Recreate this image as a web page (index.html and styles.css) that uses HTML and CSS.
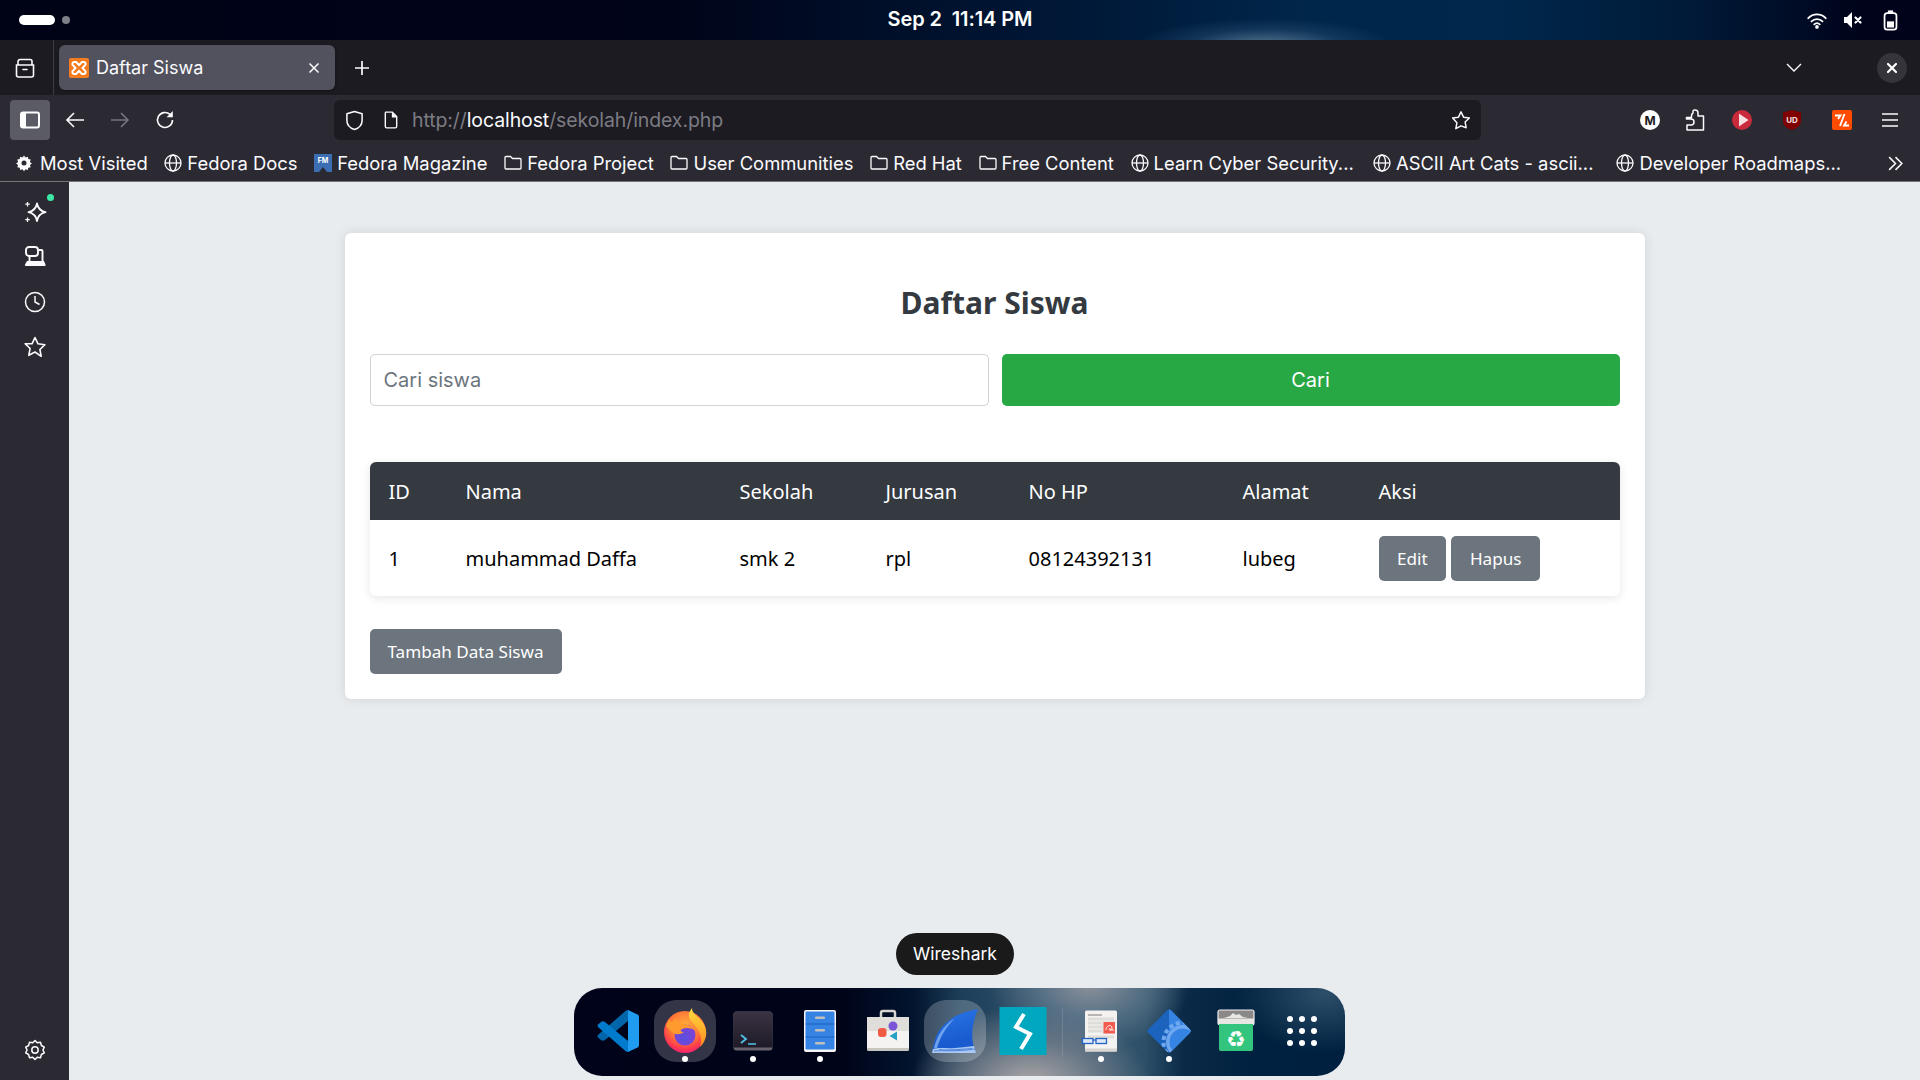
FILE: index.html
```html
<!DOCTYPE html>
<html lang="id">
<head>
<meta charset="utf-8">
<title>Daftar Siswa</title>
<link rel="stylesheet" href="styles.css">
</head>
<body>
<div class="screen">
  <header class="topbar">
    <div class="workspaces"><span class="ws-pill"></span><span class="ws-dot"></span></div>
    <div class="clock">Sep 2&nbsp; 11:14 PM</div>
    <div class="tray">
      <svg class="tray-wifi" viewBox="0 0 24 20"><path d="M2.500 7.500a13 13 0 0 1 19 0M6 11a8.500 8.500 0 0 1 12 0M9 14.200a4.500 4.500 0 0 1 6 0" fill="none" stroke="#fff" stroke-width="2" stroke-linecap="round"/><circle cx="12" cy="17" r="2" fill="#fff"/></svg>
      <svg class="tray-vol" viewBox="0 0 20 20"><path d="M1 7h3l5-5v16l-5-5H1z" fill="#fff"/><path d="M12.500 7.500l5 5M17.500 7.500l-5 5" stroke="#fff" stroke-width="2.200" stroke-linecap="round"/></svg>
      <svg class="tray-bat" viewBox="0 0 16 24"><rect x="1.200" y="3.500" width="13.600" height="19" rx="3" fill="none" stroke="#fff" stroke-width="2"/><rect x="5" y="0.500" width="6" height="3" fill="#fff"/><rect x="4" y="13" width="8" height="7" fill="#fff"/></svg>
    </div>
  </header>

  <div class="tabstrip">
    <div class="tabs-view">
      <svg class="ico-20" viewBox="0 0 20 20"><path d="M1.500 7h17v10a2 2 0 0 1-2 2h-13a2 2 0 0 1-2-2zM3 7V3.500a2 2 0 0 1 2-2h10a2 2 0 0 1 2 2V7M8 11.500h4" fill="none" stroke="#fbfbfe" stroke-width="1.600" stroke-linecap="round"/></svg>
    </div>
    <div class="tab">
      <svg class="favicon" viewBox="0 0 20 20"><rect width="20" height="20" rx="2" fill="#f47c20"/><path d="M7 4h-1.500a2 2 0 0 0-1 3.800L6.500 10l-2 2.200a2 2 0 0 0 1 3.800H7l3-3 3 3h1.500a2 2 0 0 0 1-3.800L13.500 10l2-2.200a2 2 0 0 0-1-3.800H13l-3 3z" fill="none" stroke="#fff" stroke-width="2"/></svg>
      <span class="tab-title">Daftar Siswa</span>
      <svg class="tab-close" viewBox="0 0 12 12"><path d="M1.500 1.500l9 9M10.500 1.500l-9 9" stroke="#fbfbfe" stroke-width="1.500"/></svg>
    </div>
    <svg class="tab-new" viewBox="0 0 16 16"><path d="M8 1v14M1 8h14" stroke="#fbfbfe" stroke-width="1.700"/></svg>
    <div class="strip-end">
      <svg class="tab-list" viewBox="0 0 16 10"><path d="M1 1l7 7 7-7" fill="none" stroke="#fbfbfe" stroke-width="1.400"/></svg>
      <div class="win-close"><svg viewBox="0 0 12 12"><path d="M2 2l8 8M10 2l-8 8" stroke="#fff" stroke-width="2.200" stroke-linecap="round"/></svg></div>
    </div>
  </div>

  <nav class="navbar">
    <div class="sidebar-toggle"><svg class="ico-20" viewBox="0 0 20 20"><rect x="1" y="2.500" width="18" height="15" rx="2" fill="none" stroke="#fff" stroke-width="2"/><rect x="1" y="2.500" width="5" height="15" fill="#fff"/></svg></div>
    <svg class="nav-ico nav-back" viewBox="0 0 20 20"><path d="M19 10H2M9 3l-7 7 7 7" fill="none" stroke="#fbfbfe" stroke-width="1.600"/></svg>
    <svg class="nav-ico nav-fwd" viewBox="0 0 20 20"><path d="M1 10h17M11 3l7 7-7 7" fill="none" stroke="#77767e" stroke-width="1.600"/></svg>
    <svg class="nav-ico nav-reload" viewBox="0 0 20 20"><path d="M17.500 10a7.500 7.500 0 1 1-2.500-5.600" fill="none" stroke="#fbfbfe" stroke-width="1.600"/><path d="M17.800 1v6.200h-6.200z" fill="#fbfbfe"/></svg>
    <div class="urlbar">
      <svg class="url-shield" viewBox="0 0 20 22"><path d="M10 1.500l8 2.500v7c0 5-3.500 8-8 9.500-4.500-1.500-8-4.500-8-9.500V4z" fill="none" stroke="#fbfbfe" stroke-width="1.600" stroke-linejoin="round"/></svg>
      <svg class="url-doc" viewBox="0 0 16 20"><path d="M2 1h7.500L14.500 6v11.500a1.500 1.500 0 0 1-1.500 1.500H3a1.500 1.500 0 0 1-1.500-1.500V2z" fill="none" stroke="#fbfbfe" stroke-width="1.600"/><path d="M9 1v6h6z" fill="#fbfbfe"/></svg>
      <span class="url-text">http://<b class="url-host">localhost</b>/sekolah/index.php</span>
      <svg class="url-star" viewBox="0 0 22 22"><path d="M11 2l2.800 5.900 6.400.8-4.700 4.400 1.200 6.400L11 17.400l-5.700 3.100 1.200-6.400L1.800 8.700l6.400-.8z" fill="none" stroke="#fbfbfe" stroke-width="1.600" stroke-linejoin="round"/></svg>
    </div>
    <div class="ext-row">
      <svg class="ext ext-m" viewBox="0 0 20 20"><circle cx="10" cy="10" r="10" fill="#fff"/><text x="10" y="14.500" class="ext-m-text">M</text></svg>
      <svg class="ext ext-puzzle" viewBox="0 0 20 22"><path d="M1.500 8.500h5V6.800A3 3 0 0 1 8 4V2.500a1.500 1.500 0 0 1 1.500-1.500h.5A3 3 0 0 1 13 4v3h5.500v14H2v-5h4a3 3 0 0 0 0-6H1.500z" fill="none" stroke="#fbfbfe" stroke-width="1.500" stroke-linejoin="round"/></svg>
      <svg class="ext ext-play" viewBox="0 0 20 20"><circle cx="10" cy="10" r="10" fill="#c92a3c"/><path d="M7 3.500l9.500 6.500L7 16.500z" fill="#f4dfe1"/></svg>
      <svg class="ext ext-ub" viewBox="0 0 20 20"><path d="M10 0l9 2.500v8c0 5-4 8-9 9.500-5-1.500-9-4.500-9-9.500v-8z" fill="#800000"/><text x="10" y="13" class="ext-ub-text">UD</text></svg>
      <svg class="ext ext-orange" viewBox="0 0 20 20"><rect width="20" height="20" rx="2" fill="#ff4c00"/><path d="M3 5.500h5.500L6 9M8 16l4.500-12M17 15.500h-5l2.500-4" fill="none" stroke="#fff" stroke-width="1.900"/></svg>
      <svg class="ext ext-menu" viewBox="0 0 18 16"><path d="M1 2h16M1 8h16M1 14h16" stroke="#fbfbfe" stroke-width="1.500"/></svg>
    </div>
  </nav>

  <div class="bookmarks">
    <div class="bm bm-1"><svg class="bm-ico" viewBox="0 0 18 18"><path d="M9 1.500l1.500 2 2.300-.8.500 2.400 2.400.5-.8 2.300 2 1.500-2 1.500.8 2.300-2.400.5-.5 2.400-2.300-.8-1.500 2-1.500-2-2.300.8-.5-2.400-2.400-.5.8-2.300-2-1.500 2-1.500-.8-2.300 2.400-.5.500-2.400 2.300.8z" fill="#fbfbfe"/><circle cx="9" cy="9" r="2.500" fill="#2b2a33"/></svg><span>Most Visited</span></div>
    <div class="bm bm-2"><svg class="bm-ico" viewBox="0 0 18 18"><circle cx="9" cy="9" r="8" fill="none" stroke="#fbfbfe" stroke-width="1.300"/><ellipse cx="9" cy="9" rx="3.500" ry="8" fill="none" stroke="#fbfbfe" stroke-width="1.300"/><path d="M1 9h16" stroke="#fbfbfe" stroke-width="1.300"/></svg><span>Fedora Docs</span></div>
    <div class="bm bm-3"><svg class="bm-ico" viewBox="0 0 18 18"><path d="M0 0h18v18l-5 0-4-5-4 5H0z" fill="#3c6eb4"/><text x="9" y="9" class="bm-fm">FM</text></svg><span>Fedora Magazine</span></div>
    <div class="bm bm-4"><svg class="bm-ico" viewBox="0 0 18 18"><path d="M1 3.500a1 1 0 0 1 1-1h4.500l2 2H16a1 1 0 0 1 1 1V14a1 1 0 0 1-1 1H2a1 1 0 0 1-1-1z" fill="none" stroke="#fbfbfe" stroke-width="1.300"/></svg><span>Fedora Project</span></div>
    <div class="bm bm-5"><svg class="bm-ico" viewBox="0 0 18 18"><path d="M1 3.500a1 1 0 0 1 1-1h4.500l2 2H16a1 1 0 0 1 1 1V14a1 1 0 0 1-1 1H2a1 1 0 0 1-1-1z" fill="none" stroke="#fbfbfe" stroke-width="1.300"/></svg><span>User Communities</span></div>
    <div class="bm bm-6"><svg class="bm-ico" viewBox="0 0 18 18"><path d="M1 3.500a1 1 0 0 1 1-1h4.500l2 2H16a1 1 0 0 1 1 1V14a1 1 0 0 1-1 1H2a1 1 0 0 1-1-1z" fill="none" stroke="#fbfbfe" stroke-width="1.300"/></svg><span>Red Hat</span></div>
    <div class="bm bm-7"><svg class="bm-ico" viewBox="0 0 18 18"><path d="M1 3.500a1 1 0 0 1 1-1h4.500l2 2H16a1 1 0 0 1 1 1V14a1 1 0 0 1-1 1H2a1 1 0 0 1-1-1z" fill="none" stroke="#fbfbfe" stroke-width="1.300"/></svg><span>Free Content</span></div>
    <div class="bm bm-8"><svg class="bm-ico" viewBox="0 0 18 18"><circle cx="9" cy="9" r="8" fill="none" stroke="#fbfbfe" stroke-width="1.300"/><ellipse cx="9" cy="9" rx="3.500" ry="8" fill="none" stroke="#fbfbfe" stroke-width="1.300"/><path d="M1 9h16" stroke="#fbfbfe" stroke-width="1.300"/></svg><span>Learn Cyber Security...</span></div>
    <div class="bm bm-9"><svg class="bm-ico" viewBox="0 0 18 18"><circle cx="9" cy="9" r="8" fill="none" stroke="#fbfbfe" stroke-width="1.300"/><ellipse cx="9" cy="9" rx="3.500" ry="8" fill="none" stroke="#fbfbfe" stroke-width="1.300"/><path d="M1 9h16" stroke="#fbfbfe" stroke-width="1.300"/></svg><span>ASCII Art Cats - ascii...</span></div>
    <div class="bm bm-10"><svg class="bm-ico" viewBox="0 0 18 18"><circle cx="9" cy="9" r="8" fill="none" stroke="#fbfbfe" stroke-width="1.300"/><ellipse cx="9" cy="9" rx="3.500" ry="8" fill="none" stroke="#fbfbfe" stroke-width="1.300"/><path d="M1 9h16" stroke="#fbfbfe" stroke-width="1.300"/></svg><span>Developer Roadmaps...</span></div>
    <svg class="bm-more" viewBox="0 0 16 16"><path d="M2 2l6 6-6 6M8 2l6 6-6 6" fill="none" stroke="#fbfbfe" stroke-width="1.400"/></svg>
  </div>

  <div class="main">
    <aside class="sidebar">
      <div class="side-top">
        <div class="side-item side-ai">
          <svg class="side-ico" viewBox="0 0 24 24"><path d="M14 3.500c.9 5 3.300 7.500 8.500 8.700-5.200 1.200-7.600 3.700-8.500 8.800-.9-5.100-3.300-7.600-8.500-8.800C10.700 11 13.100 8.500 14 3.500z" fill="none" stroke="#fbfbfe" stroke-width="1.800" stroke-linejoin="round"/><path d="M4.500 2v4.500M2.300 4.200h4.400M4.500 17.500V22M2.300 19.700h4.400" stroke="#fbfbfe" stroke-width="1.200"/></svg>
          <span class="side-badge"></span>
        </div>
        <div class="side-item"><svg class="side-ico" viewBox="0 0 24 24"><rect x="3" y="2" width="12" height="9" rx="3" fill="none" stroke="#fbfbfe" stroke-width="1.900"/><path d="M16 5h2.500a1 1 0 0 1 1 1v10M6.500 11v5" fill="none" stroke="#fbfbfe" stroke-width="1.900"/><path d="M4 16h17l1.500 3.500a1 1 0 0 1-1 1.500H3a1 1 0 0 1-1-1.500z" fill="#fbfbfe"/></svg></div>
        <div class="side-item"><svg class="side-ico" viewBox="0 0 24 24"><circle cx="12" cy="12" r="9.500" fill="none" stroke="#fbfbfe" stroke-width="1.500"/><path d="M12 6v6l4.500 2.500" fill="none" stroke="#fbfbfe" stroke-width="1.500"/></svg></div>
        <div class="side-item"><svg class="side-ico" viewBox="0 0 24 24"><path d="M12 2.500l3 6.300 6.900.9-5 4.800 1.300 6.800L12 17l-6.200 3.300 1.300-6.800-5-4.800L9 8.800z" fill="none" stroke="#fbfbfe" stroke-width="1.600" stroke-linejoin="round"/></svg></div>
      </div>
      <div class="side-item side-gear"><svg class="side-ico" viewBox="0 0 24 24"><path d="M12 2.500l2.200 2.300 3.300-.5.900 3.200 2.900 1.700-1.400 2.800 1.400 2.800-2.900 1.700-.9 3.200-3.300-.5L12 21.500l-2.200-2.300-3.300.5-.9-3.200-2.900-1.700L4.100 12 2.700 9.200l2.900-1.700.9-3.200 3.300.5z" fill="none" stroke="#fbfbfe" stroke-width="1.500" stroke-linejoin="round"/><circle cx="12" cy="12" r="3.200" fill="none" stroke="#fbfbfe" stroke-width="1.500"/></svg></div>
    </aside>

    <main class="content">
      <section class="card">
        <h1 class="card-title">Daftar Siswa</h1>
        <form class="search">
          <input class="search-input" type="text" placeholder="Cari siswa">
          <button class="search-btn" type="button">Cari</button>
        </form>
        <table class="students">
          <thead>
            <tr>
              <th class="c-id">ID</th>
              <th class="c-nama">Nama</th>
              <th class="c-sekolah">Sekolah</th>
              <th class="c-jurusan">Jurusan</th>
              <th class="c-hp">No HP</th>
              <th class="c-alamat">Alamat</th>
              <th class="c-aksi">Aksi</th>
            </tr>
          </thead>
          <tbody>
            <tr>
              <td>1</td>
              <td>muhammad Daffa</td>
              <td>smk 2</td>
              <td>rpl</td>
              <td>08124392131</td>
              <td>lubeg</td>
              <td class="actions"><a class="btn">Edit</a><a class="btn">Hapus</a></td>
            </tr>
          </tbody>
        </table>
        <a class="btn btn-add">Tambah Data Siswa</a>
      </section>
    </main>
  </div>

  <div class="tooltip">Wireshark</div>

  <div class="dock">
    <div class="slot">
      <svg class="dock-ico" viewBox="0 0 48 48"><path d="M34 14L11 33q-2 1.500-4 0l-3-2.500q-1-1 0-2.500L32 3.500 34 3z" fill="#0065a9"/><path d="M34 34L11 15q-2-1.500-4 0l-3 2.500q-1 1 0 2.500L32 44.500l2 .5z" fill="#007acc"/><path d="M34 3l9.500 4.500q1.500.8 1.500 2.500v28q0 1.700-1.500 2.500L34 45z" fill="#1f9cf0"/></svg>
    </div>
    <div class="slot slot-active">
      <svg class="dock-ico" viewBox="0 0 48 48">
        <defs>
          <radialGradient id="fxBase" cx="0.500" cy="0.350" r="0.700"><stop offset="0" stop-color="#ffb13a"/><stop offset="0.550" stop-color="#ff7139"/><stop offset="0.800" stop-color="#ff3750"/><stop offset="1" stop-color="#e31587"/></radialGradient>
          <linearGradient id="fxTop" x1="0" y1="0" x2="0" y2="1"><stop offset="0" stop-color="#ffdc3e"/><stop offset="1" stop-color="#ff8a1f"/></linearGradient>
          <radialGradient id="fxGlobe" cx="0.450" cy="0.650" r="0.750"><stop offset="0" stop-color="#5a4fe0"/><stop offset="1" stop-color="#8a3fd0"/></radialGradient>
        </defs>
        <circle cx="24" cy="25" r="21" fill="url(#fxBase)"/>
        <path d="M31 1c0 5 4 7 8 11 5 5 7 11 6 17-1 5-3 8-6 11 2-6 1-12-2-17-3-6-8-8-9-13-1-3 1-6 3-9z" fill="url(#fxTop)"/>
        <circle cx="24" cy="28" r="10.500" fill="url(#fxGlobe)"/>
        <path d="M5 19c1-3 2-5 4-7 0 2 1 3 2 3 1-2 3-3 4-4 0 3 3 5 7 6 5 1 9 2 12 6-4-2-9-3-13-1-2 1-2 3 2 3-4 3-9 3-12 0-2-1-4-4-6-6z" fill="#ff9a2e"/>
      </svg>
      <span class="dot"></span>
    </div>
    <div class="slot">
      <svg class="dock-ico" viewBox="0 0 48 48"><defs><linearGradient id="termBg" x1="0" y1="0" x2="0" y2="1"><stop offset="0" stop-color="#3a3343"/><stop offset="1" stop-color="#1f1a28"/></linearGradient></defs><rect x="4.500" y="4.500" width="39" height="39" rx="3" fill="#66626c"/><path d="M4.500 7.500a3 3 0 0 1 3-3h33a3 3 0 0 1 3 3v33h-39z" fill="url(#termBg)"/><path d="M12 28l5 4-5 4" fill="none" stroke="#4fc3e8" stroke-width="1.800"/><path d="M19 37h8" stroke="#4fc3e8" stroke-width="1.500"/></svg>
      <span class="dot"></span>
    </div>
    <div class="slot">
      <svg class="dock-ico" viewBox="0 0 48 48"><rect x="8" y="3" width="32" height="42" rx="2" fill="#f6f5f4"/><rect x="9.500" y="4.500" width="29" height="38" rx="1" fill="#3584e4"/><path d="M9.500 17h29M9.500 30h29" stroke="#1c5fb8" stroke-width="1"/><rect x="19" y="9.500" width="10" height="2.500" rx="1" fill="#c0bfbc"/><rect x="19" y="22" width="10" height="2.500" rx="1" fill="#c0bfbc"/><rect x="19" y="35" width="10" height="2.500" rx="1" fill="#c0bfbc"/></svg>
      <span class="dot"></span>
    </div>
    <div class="slot">
      <svg class="dock-ico" viewBox="0 0 48 48"><path d="M17 11V6a2 2 0 0 1 2-2h10a2 2 0 0 1 2 2v5" fill="none" stroke="#d5d3cf" stroke-width="2.500"/><path d="M3 10h42v32a2 2 0 0 1-2 2H5a2 2 0 0 1-2-2z" fill="#f4f3f1"/><path d="M3 10h42v14H3z" fill="#dfdeda"/><path d="M3 41h42v1a2 2 0 0 1-2 2H5a2 2 0 0 1-2-2z" fill="#c7c5c0"/><circle cx="29" cy="19" r="4.500" fill="#7a55d8"/><rect x="14" y="21" width="8.500" height="9" rx="3" fill="#f05a45"/><path d="M33 24.500v9l-7.500-4.500z" fill="#27a1c4"/></svg>
    </div>
    <div class="slot slot-hover">
      <svg class="dock-ico" viewBox="0 0 48 48"><defs><linearGradient id="fin" x1="0" y1="0" x2="0.300" y2="1"><stop offset="0" stop-color="#2b78e8"/><stop offset="0.800" stop-color="#1a5cd0"/></linearGradient></defs><path d="M1 46C3 32 7 23 13 18 20 11 29 5 47 2 42 14 38 30 45 46z" fill="url(#fin)"/><path d="M3 41C6 29 12 19 24 11 15 20 9 30 6 41z" fill="#8ab8f5" opacity=".75"/><path d="M1 46l1-4c8-2 14 0 22-1 8-1 13-1 19-2l2 7z" fill="#a9c8f2"/><path d="M3 44c10-1 20 1 41-2M8 42.500c8 1 20 0 33-1" stroke="#3d76d6" stroke-width=".8" fill="none"/></svg>
    </div>
    <div class="slot">
      <svg class="dock-ico" viewBox="0 0 48 48"><rect x="0.500" width="47" height="48" fill="#00a7be"/><path d="M25 7L17 20l14 7-9 15" fill="none" stroke="#fff" stroke-width="4"/></svg>
    </div>
    <div class="dock-sep"></div>
    <div class="slot">
      <svg class="dock-ico" viewBox="0 0 48 48"><rect x="8" y="3.500" width="32" height="41" rx="1.500" fill="#f4f3f1"/><rect x="8" y="41.500" width="32" height="3" fill="#d8d6d2"/><path d="M11 8h14" stroke="#8f8d89" stroke-width="1.200"/><path d="M11 12h26M11 16h14M11 20h14M11 24h14M11 30h26" stroke="#dfddda" stroke-width="3"/><rect x="25" y="14" width="13" height="13" fill="#e8e6e2"/><rect x="26.500" y="15" width="11.500" height="11.500" fill="#f35b4f"/><path d="M29 23c0-5 6-6 6-2s-3 2-3 1 4 2 5 1" fill="none" stroke="#fff" stroke-width=".9"/><rect x="5.500" y="31.500" width="10.500" height="5" fill="#dce8f8" stroke="#2263c4" stroke-width="1.300"/><rect x="19" y="31.500" width="10.500" height="5" fill="#dce8f8" stroke="#2263c4" stroke-width="1.300"/><path d="M16 33h3" stroke="#2263c4" stroke-width="1.300"/></svg>
      <span class="dot"></span>
    </div>
    <div class="slot">
      <svg class="dock-ico" viewBox="0 0 48 48"><defs><clipPath id="dia"><rect x="8" y="8" width="32" height="32" rx="3" transform="rotate(45 24 24)"/></clipPath></defs><g clip-path="url(#dia)"><rect width="48" height="48" fill="#1c63bd"/><path d="M24 0L48 24 24 48z" fill="#3584e4"/><circle cx="38" cy="35" r="19.500" fill="none" stroke="#6fa8ee" stroke-width="4" stroke-dasharray="4 3"/><circle cx="38" cy="35" r="17" fill="#6fa8ee"/><circle cx="38" cy="35" r="13.500" fill="#3584e4"/></g></svg>
      <span class="dot"></span>
    </div>
    <div class="slot">
      <svg class="dock-ico" viewBox="0 0 48 48"><rect x="6" y="3" width="36" height="15" rx="2" fill="#8a8987" stroke="#f0efed" stroke-width="1.200"/><path d="M12 11l6-2 3-3 3 2 3-1 4 3 5 1z" fill="#e8e7e5"/><rect x="6" y="11.500" width="36" height="6" fill="#e8e7e4"/><path d="M7 17h34v25a2 2 0 0 1-2 2H9a2 2 0 0 1-2-2z" fill="#33c57d"/><text x="24" y="40" class="recycle">♻</text></svg>
    </div>
    <div class="slot">
      <svg class="dock-ico" viewBox="0 0 48 48"><g fill="#fff"><circle cx="10" cy="12" r="3"/><circle cx="22" cy="12" r="3"/><circle cx="34" cy="12" r="3"/><circle cx="10" cy="24" r="3"/><circle cx="22" cy="24" r="3"/><circle cx="34" cy="24" r="3"/><circle cx="10" cy="36" r="3"/><circle cx="22" cy="36" r="3"/><circle cx="34" cy="36" r="3"/></g></svg>
    </div>
  </div>
</div>
</body>
</html>
```

FILE: styles.css
```css
* { box-sizing: border-box; }
html, body { margin: 0; padding: 0; height: 100%; overflow: hidden; }
body { font-family: "Noto Sans", sans-serif; background: #e9ecef; }
svg { display: block; flex: none; }

.screen { position: relative; width: 1920px; height: 1080px; display: flex; flex-direction: column; overflow: hidden; }

/* GNOME top bar */
.topbar {
  height: 40px; flex: none; display: flex; align-items: center; justify-content: space-between; position: relative; padding: 0 22px 0 19px;
  background:
    radial-gradient(ellipse 130px 28px at 1265px 46px, rgba(110,140,165,.8), rgba(50,90,125,.35) 60%, rgba(0,0,0,0) 100%),
    linear-gradient(90deg, #000316 0%, #000419 35%, #001a3a 58%, #00264a 68%, #00284c 78%, #001a38 88%, #00031a 97%);
}
.workspaces { display: flex; align-items: center; gap: 7px; }
.ws-pill { width: 36px; height: 10px; border-radius: 5px; background: #fff; }
.ws-dot { width: 8px; height: 8px; border-radius: 50%; background: #7d7f88; }
.clock { position: absolute; left: 0; right: 0; top: 7px; line-height: 24px; text-align: center; color: #fff; font-family: "Inter", sans-serif; font-weight: 600; font-size: 20px; letter-spacing: -.1px; }
.tray { display: flex; align-items: center; gap: 15px; }
.tray-wifi { width: 22px; height: 19px; }
.tray-vol { width: 20px; height: 20px; }
.tray-bat { width: 15px; height: 21px; margin-left: 5px; }

/* Tab strip */
.tabstrip { height: 55px; flex: none; background: #1c1b22; display: flex; align-items: center; }
.tabs-view { width: 54px; height: 55px; display: flex; align-items: center; justify-content: center; border-right: 1px solid #3d3c44; padding-right: 4px; }
.ico-20 { width: 20px; height: 20px; }
.tab { margin-left: 5px; width: 276px; height: 45px; border-radius: 6px; background: #52525e; display: flex; align-items: center; padding: 0 15px 0 10px; box-shadow: 0 1px 3px rgba(0,0,0,.4); }
.favicon { width: 20px; height: 20px; }
.tab-title { margin-left: 7px; flex: 1; color: #fbfbfe; font: 400 18px "Inter", sans-serif; }
.tab-close { width: 12px; height: 12px; }
.tab-new { width: 16px; height: 16px; margin-left: 19px; }
.strip-end { margin-left: auto; display: flex; align-items: center; gap: 0; padding-right: 13px; }
.tab-list { width: 16px; height: 10px; margin-right: 75px; }
.win-close { width: 30px; height: 30px; border-radius: 50%; background: #35343b; display: flex; align-items: center; justify-content: center; }
.win-close svg { width: 12px; height: 12px; }

/* Nav bar */
.navbar { height: 45px; flex: none; background: #2b2a33; display: flex; align-items: flex-end; padding-left: 10px; }
.sidebar-toggle { width: 40px; height: 40px; border-radius: 4px; background: #5b5b66; display: flex; align-items: center; justify-content: center; }
.nav-ico { width: 20px; height: 20px; margin-bottom: 10px; }
.nav-back { margin-left: 15px; }
.nav-fwd { margin-left: 25px; }
.nav-reload { margin-left: 25px; }
.urlbar { margin-left: 159px; width: 1147px; height: 40px; border-radius: 6px; background: #1c1b22; display: flex; align-items: center; padding: 0 10px 0 11px; }
.url-shield { width: 19px; height: 21px; }
.url-doc { width: 14px; height: 18px; margin-left: 20px; }
.url-text { margin-left: 14px; flex: 1; color: #7d7c83; font: 400 19.500px "Inter", sans-serif; letter-spacing: -.1px; }
.url-host { color: #fbfbfe; font-weight: 400; }
.url-star { width: 20px; height: 20px; }
.ext-row { flex: 1; height: 40px; display: flex; align-items: center; padding-left: 159px; position: relative; }
.ext { width: 20px; height: 20px; }
.ext-m-text { font: 700 12px "Inter", sans-serif; text-anchor: middle; fill: #1c1b22; }
.ext-puzzle { margin-left: 25px; height: 22px; }
.ext-play { margin-left: 27px; }
.ext-ub { margin-left: 30px; }
.ext-ub-text { font: 700 8px "Inter", sans-serif; text-anchor: middle; fill: #f5e0e0; }
.ext-orange { margin-left: 30px; }
.ext-menu { margin-left: 29px; width: 18px; height: 16px; }

/* Bookmarks */
.bookmarks { height: 42px; flex: none; background: #2b2a33; display: flex; align-items: center; padding: 5px 16px 0 15px; border-bottom: 1px solid #74747a; color: #fbfbfe; font: 400 18.400px "Inter", sans-serif; white-space: nowrap; }
.bm { display: flex; align-items: center; gap: 5px; margin-right: 16.700px; }
.bm-1 { gap: 7px; }
.bm-8 { margin-right: 19.200px; }
.bm-9 { margin-right: 23px; }
.bm-ico { width: 18px; height: 18px; }
.bm-fm { font: 700 7px "Inter", sans-serif; text-anchor: middle; fill: #fff; }
.bm-more { width: 17px; height: 17px; margin-left: auto; }

/* Main */
.main { flex: 1; min-height: 0; display: flex; }
.sidebar { width: 69px; flex: none; background: #2b2a33; display: flex; flex-direction: column; justify-content: space-between; align-items: center; padding: 18px 0 18px; }
.side-top { display: flex; flex-direction: column; gap: 21px; }
.side-item { width: 24px; height: 24px; position: relative; }
.side-ico { width: 24px; height: 24px; }
.side-badge { position: absolute; top: -6px; right: -7px; width: 7px; height: 7px; border-radius: 50%; background: #3ee8a8; }
.side-gear { margin-bottom: 0; }

.content { flex: 1; min-width: 0; background: #e9ecef; }
.card { width: 1300px; margin: 51px auto 0; padding: 25px; background: #fff; border-radius: 6px; box-shadow: 0 0 12px rgba(0,0,0,.1); }
.card-title { margin: 25px 0 31px; text-align: center; color: #343a40; font: 700 30px/40px "Noto Sans", sans-serif; }
.search { display: grid; grid-template-columns: 619px 1fr; gap: 13px; margin-bottom: 56px; }
.search-input { width: 100%; height: 52px; border: 1.500px solid #ced4da; border-radius: 5px; padding: 0 13px; font: 400 20px "Inter", sans-serif; color: #495057; background: #fff; outline: none; }
.search-input::placeholder { color: #6c757d; opacity: 1; }
.search-btn { width: 100%; height: 52px; border: 0; border-radius: 5px; background: #28a745; color: #fff; font: 400 20px "Inter", sans-serif; }

.students { width: 100%; table-layout: fixed; border-collapse: separate; border-spacing: 0; background: #fff; border-radius: 6px; box-shadow: 0 2px 10px rgba(0,0,0,.1); margin-bottom: 33px; }
.students th { height: 58px; padding: 0 19px; background: #343a40; color: #fff; font: 400 20px "Noto Sans", sans-serif; text-align: left; }
.students th:first-child { border-top-left-radius: 6px; }
.students th:last-child { border-top-right-radius: 6px; }
.students td { height: 76px; padding: 0 19px; color: #000; font: 400 20px "Noto Sans", sans-serif; }
.c-id { width: 77px; }
.c-nama { width: 274px; }
.c-sekolah { width: 146px; }
.c-jurusan { width: 143px; }
.c-hp { width: 214px; }
.c-alamat { width: 136px; }
.c-aksi { width: 260px; }
.actions { white-space: nowrap; }
.btn { display: inline-flex; align-items: center; justify-content: center; height: 45px; padding: 0 18.600px; border-radius: 5px; background: #6c757d; color: #fff; font: 400 17.100px "Noto Sans", sans-serif; }
.btn + .btn { margin-left: 5px; }
.btn-add { display: flex; width: 192px; padding: 0; }

/* Dock */
.tooltip { position: absolute; left: 896px; top: 933px; width: 118px; height: 42px; border-radius: 21px; background: #1a1a1a; color: #fff; font: 400 17.500px/42px "Inter", sans-serif; text-align: center; }
.dock {
  position: absolute; left: 574px; top: 988px; height: 88px; width: 771px; border-radius: 28px; padding: 12px 11px 0 12.500px; display: flex; align-items: flex-start; gap: 5.500px;
  background:
    radial-gradient(ellipse 120px 80px at 456px 98px, rgba(175,170,170,1), rgba(130,135,145,.65) 55%, rgba(0,0,0,0) 100%),
    radial-gradient(ellipse 100px 65px at 516px -4px, rgba(140,145,155,1), rgba(95,120,140,.7) 55%, rgba(0,0,0,0) 100%),
    radial-gradient(ellipse 90px 60px at 750px 5px, rgba(60,95,120,.75), rgba(0,0,0,0) 100%),
    linear-gradient(90deg, #000319 0%, #000419 35%, #02142e 44%, #1d3e58 50%, #3a5a74 65%, #2d5068 74%, #0a2a48 79%, #00213f 88%, #002040 100%);
}
.slot { position: relative; width: 62px; height: 62px; flex: none; border-radius: 22px; display: flex; align-items: center; justify-content: center; }
.slot-active { background: rgba(255,255,255,.2); }
.slot-hover { background: rgba(255,255,255,.22); }
.dock-ico { width: 48px; height: 48px; }
.dock-sep { width: 1px; height: 48px; flex: none; align-self: center; margin: -12px 1.500px 0 3px; background: rgba(255,255,255,.13); }
.dot { position: absolute; left: 28px; bottom: 0; width: 6px; height: 6px; border-radius: 50%; background: #fff; }
.recycle { font: 700 22px "DejaVu Sans", sans-serif; text-anchor: middle; fill: #fff; }
```
